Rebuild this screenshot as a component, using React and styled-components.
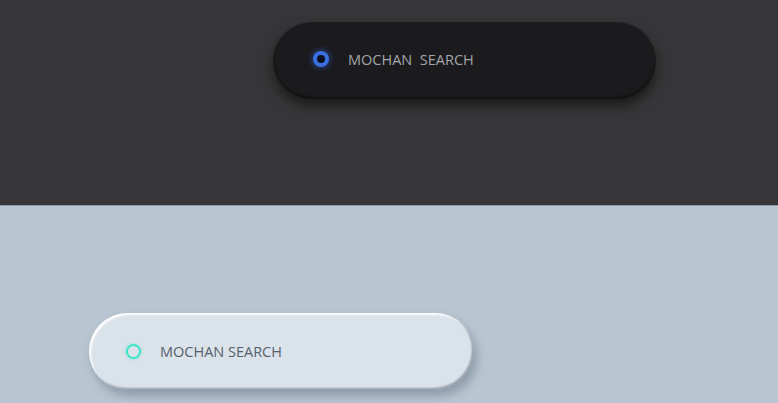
import styled, { createGlobalStyle } from "styled-components";

const Global = createGlobalStyle`
    html, body {
        margin: 0;
        padding: 0;
        overflow: hidden;
    }
    body {
        font-family: "Open Sans", "Liberation Sans", sans-serif;
    }
`

const Page = styled.div`
    width: 778px;
    height: 403px;
    display: flex;
    flex-direction: column;
`

const Section = styled.section`
    display: flex;
    align-items: flex-start;
    box-sizing: border-box;
    height: ${p => p.h}px;
    padding: ${p => p.pad};
    background: ${p => p.bg};
    border-bottom: ${p => p.line || "none"};
`

const Pill = styled.div`
    display: flex;
    align-items: center;
    box-sizing: border-box;
    width: ${p => p.w}px;
    height: ${p => p.hgt}px;
    padding-left: ${p => p.pl}px;
    padding-bottom: ${p => p.dark ? 2 : 0}px;
    border-radius: 40px;
    background: ${p => p.dark ? "#1b1b1d" : "#dae2ea"};
    box-shadow: ${p => p.dark
        ? "0 7px 12px rgba(0,0,0,0.5), inset 0 1px 1px rgba(255,255,255,0.13), inset 0 -2px 3px rgba(0,0,0,0.4)"
        : "3px 6px 10px rgba(60,75,95,0.35), inset -2px -2px 2px rgba(95,105,120,0.55), inset 2px 2px 2px rgba(255,255,255,0.95)"};
`

const DarkDot = styled.span`
    flex: none;
    width: 8px;
    height: 8px;
    border-radius: 50%;
    background: #0b1020;
    box-shadow: 0 0 0 4px #3b6ee0, 0 0 5px 6px rgba(55,105,230,0.35);
    margin-left: 4px;
    margin-right: 23px;
`

const LightDot = styled.span`
    flex: none;
    box-sizing: border-box;
    width: 15px;
    height: 15px;
    border-radius: 50%;
    border: 2.5px solid #3ee3c9;
    box-shadow: 0 0 3px rgba(62,227,201,0.6);
    margin-right: 19px;
`

const Label = styled.span`
    font-size: 14.5px;
    white-space: pre;
    color: ${p => p.dark ? "#a3a5aa" : "#56606c"};
`

export default function App() {
    return (
        <Page>
            <Global />
            <Section h={206} pad="21px 0 0 273px" bg="#363638" line="1px solid #8d9aab">
                <Pill dark w={383} hgt={78} pl={40}>
                    <DarkDot />
                    <Label dark>MOCHAN  SEARCH</Label>
                </Pill>
            </Section>
            <Section h={197} pad="107px 0 0 89px" bg="#b9c6d1">
                <Pill w={385} hgt={77} pl={37}>
                    <LightDot />
                    <Label>MOCHAN SEARCH</Label>
                </Pill>
            </Section>
        </Page>
    );
}
